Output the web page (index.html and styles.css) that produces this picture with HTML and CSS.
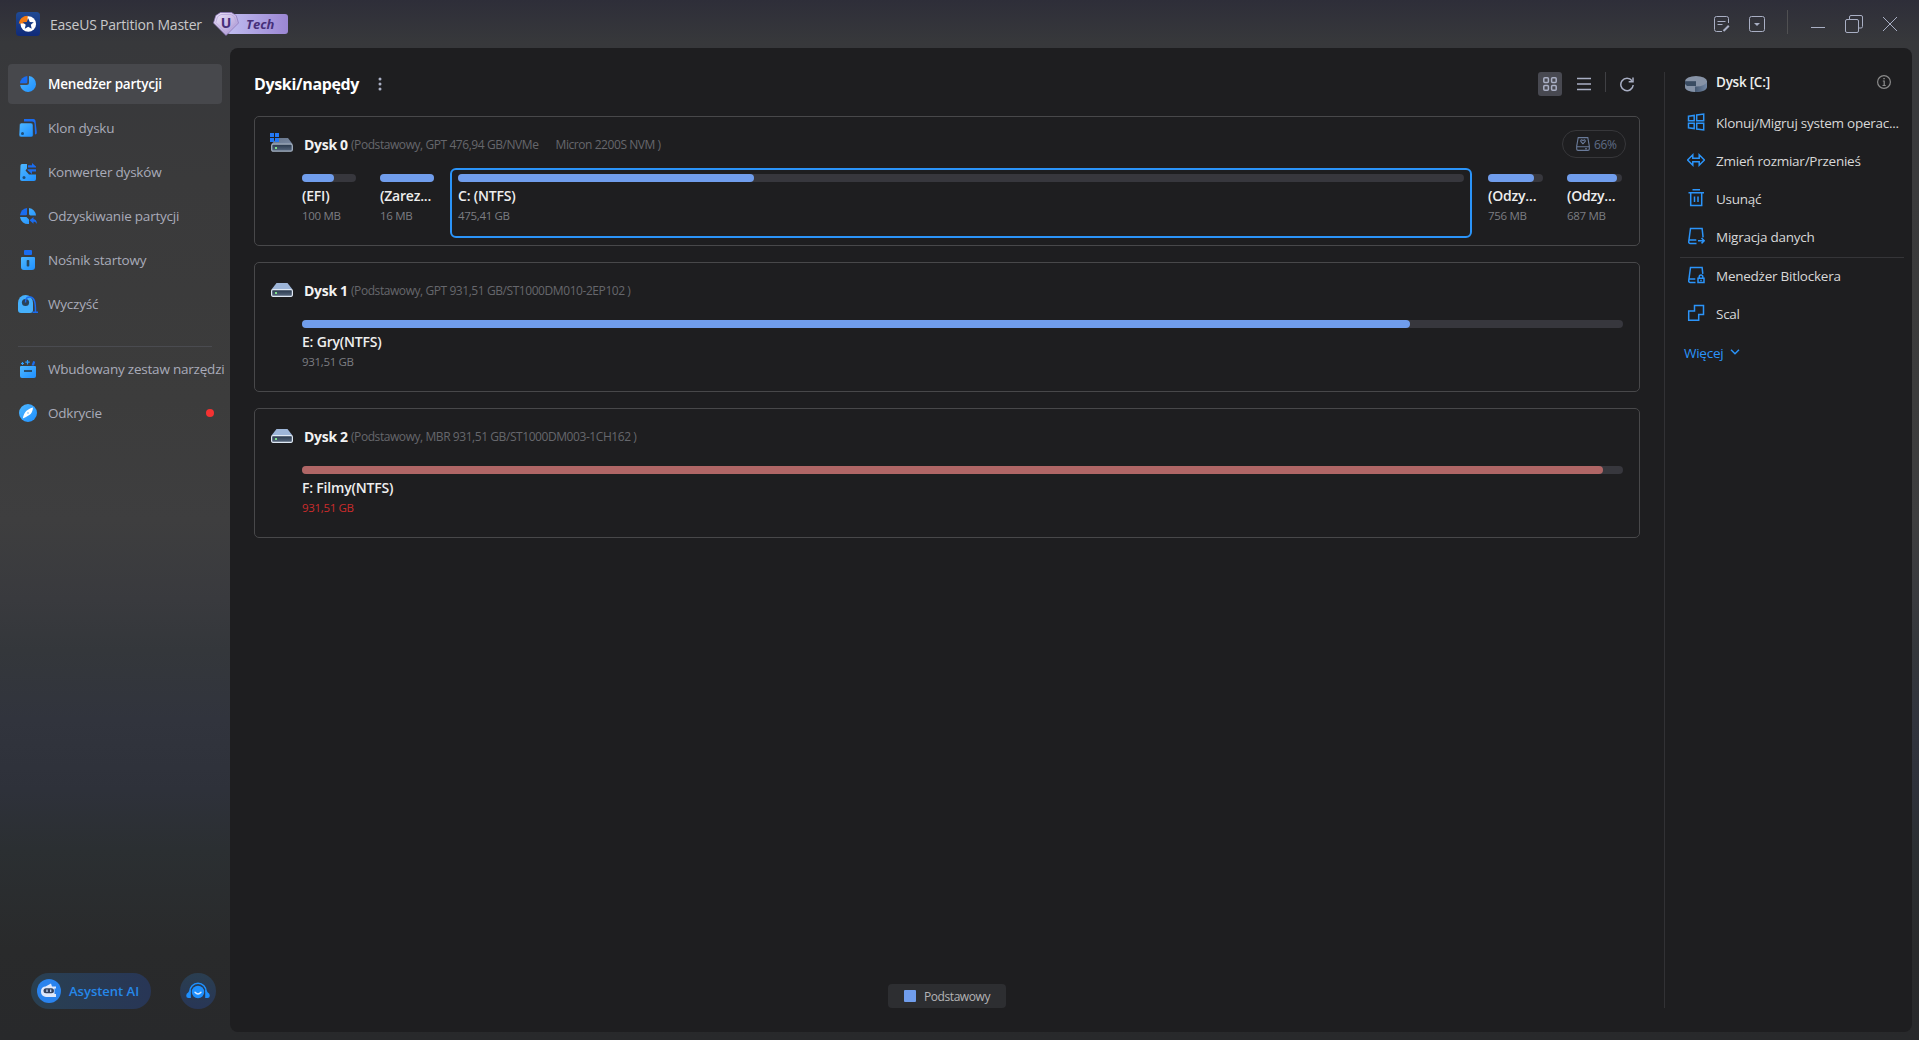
FILE: index.html
```
<!DOCTYPE html>
<html lang="pl">
<head>
    <meta charset="UTF-8">
    <title>EaseUS Partition Master</title>
    <link rel="stylesheet" href="styles.css">
</head>
<body>
<svg class="defs" width="0" height="0">
    <defs>
        <linearGradient id="blue" x1="0" y1="0" x2="1" y2="1">
            <stop offset="0" stop-color="#4fb8ff"/>
            <stop offset="1" stop-color="#1e8fff"/>
        </linearGradient>
        <linearGradient id="logo-bg" x1="0" y1="0" x2="0" y2="1">
            <stop offset="0" stop-color="#1f4a94"/>
            <stop offset="1" stop-color="#102a78"/>
        </linearGradient>
        <linearGradient id="gem" x1="0" y1="0" x2="1" y2="1">
            <stop offset="0" stop-color="#f0e8fb"/>
            <stop offset="1" stop-color="#a48fd0"/>
        </linearGradient>
        <linearGradient id="front" x1="0" y1="0" x2="0" y2="1">
            <stop offset="0" stop-color="#26364a"/>
            <stop offset="1" stop-color="#5a6a80"/>
        </linearGradient>
        <linearGradient id="steel" x1="0" y1="0" x2="1" y2="1">
            <stop offset="0" stop-color="#66748a"/>
            <stop offset="1" stop-color="#7888a0"/>
        </linearGradient>
        <linearGradient id="steel-side" x1="0" y1="0" x2="1" y2="0">
            <stop offset="0.4" stop-color="#40536c"/>
            <stop offset="1" stop-color="#7488a4"/>
        </linearGradient>
    </defs>
</svg>

<header class="titlebar">
    <svg class="logo" width="24" height="24" viewBox="0 0 24 24">
        <rect width="24" height="24" rx="3.5" fill="url(#logo-bg)"/>
        <circle cx="12.3" cy="12" r="7.8" fill="#fff"/>
        <path d="M11.6 11.4H2.8a8.8 8 0 0 1 8.8-7.6z" fill="#f47b12"/>
        <path d="M12.2 6.2l1.6 3.7 4 .3-3 2.6.9 3.9-3.5-2-3.4 2 .9-3.9-3-2.6 4-.3z" fill="#163a86"/>
    </svg>
    <span class="app-name">EaseUS Partition Master</span>
    <div class="badge">
        <svg class="gem" width="26" height="24" viewBox="0 0 26 24">
            <path d="M7.500.5h11l4.700 3 2.300 7.500L13 23.500.5 11l2.300-7.500z" fill="url(#gem)" stroke="#8a74b8" stroke-width=".7" stroke-linejoin="round"/>
            <path d="M8 2.500h10l3.500 2.300 1.700 5.700L13 20.800 2.800 10.500l1.700-5.700z" fill="none" stroke="#b6a5da" stroke-width=".8"/>
            <text x="13" y="16" text-anchor="middle" class="gem-letter">U</text>
        </svg>
        <span class="badge-text">Tech</span>
    </div>
    <div class="window-tools">
        <svg width="16" height="16" viewBox="0 0 16 16" class="line">
            <path d="M14.500 7V2.500a2 2 0 0 0-2-2h-10a2 2 0 0 0-2 2v11a2 2 0 0 0 2 2H8"/>
            <path d="M3.500 5.500h8M3.500 8.500h5"/>
            <path d="M9.500 15l5.300-5.300" class="pencil"/>
        </svg>
        <svg width="16" height="16" viewBox="0 0 16 16" class="line">
            <rect x=".5" y=".5" width="15" height="15" rx="2"/>
            <path d="M5 7h6l-3 3z" class="solid"/>
        </svg>
        <i class="tool-sep"></i>
        <svg width="16" height="16" viewBox="0 0 16 16" class="line"><path d="M1 11.500h14"/></svg>
        <svg width="18" height="18" viewBox="0 0 18 18" class="line">
            <rect x=".5" y="4.500" width="13" height="13" rx="1.500"/>
            <path d="M4.500 4.500v-2.500a1.500 1.500 0 0 1 1.500-1.500h10a1.500 1.500 0 0 1 1.500 1.500v9.500a1.500 1.500 0 0 1-1.500 1.500h-2"/>
        </svg>
        <svg width="16" height="16" viewBox="0 0 16 16" class="line"><path d="M1 1l14 14M15 1L1 15"/></svg>
    </div>
</header>

<div class="content">
    <aside class="sidebar">
        <nav class="menu">
            <a class="menu-item active">
                <svg width="20" height="20" viewBox="0 0 20 20">
                    <path d="M11 2a8 8 0 1 1-8.900 9H8.500a2.500 2.500 0 0 0 2.500-2.500z" fill="url(#blue)"/>
                    <path d="M9.300 2v6a1.300 1.300 0 0 1-1.300 1.300H2A8 8 0 0 1 9.300 2z" fill="#1a6cf0"/>
                </svg>
                <span>Menedżer partycji</span>
            </a>
            <a class="menu-item">
                <svg width="20" height="20" viewBox="0 0 20 20">
                    <path d="M6 1h9.500a2 2 0 0 1 2 1.700l1.300 11.500a2 2 0 0 1-1.800 2.300L16.500 6a2.500 2.500 0 0 0-2.500-2.500H6z" fill="#1a6cf0"/>
                    <path d="M3.500 5H13a2 2 0 0 1 2 2l.2 10a2 2 0 0 1-2 2H3a2 2 0 0 1-2-2L1.500 7a2 2 0 0 1 2-2z" fill="url(#blue)" stroke="#39393a" stroke-width=".5"/>
                    <circle cx="4.500" cy="15.500" r="1.500" fill="#1f4f7a"/>
                </svg>
                <span>Klon dysku</span>
            </a>
            <a class="menu-item">
                <svg width="20" height="20" viewBox="0 0 20 20">
                    <path d="M4 2h5v4.500l-1.500 2L11 12.500h7V17a2 2 0 0 1-2 2H4a2 2 0 0 1-2-2L2.500 3.500A1.500 1.500 0 0 1 4 2z" fill="url(#blue)"/>
                    <path d="M10 3.200h4V1l4 3.500v1h-8zM18 9.500h-4V12l-4.500-3.700v-1H18z" fill="#1a6cf0"/>
                    <circle cx="6" cy="15.500" r="1.500" fill="#1f4f7a"/>
                </svg>
                <span>Konwerter dysków</span>
            </a>
            <a class="menu-item">
                <svg width="20" height="20" viewBox="0 0 20 20">
                    <path d="M11 2a8 8 0 0 1 7 7.500h-5.500A2 2 0 0 1 11 8zM2 11h6.500l2.500 2.500V18A8 8 0 0 1 2 11z" fill="url(#blue)"/>
                    <path d="M9 2v6a1.200 1.200 0 0 1-1.200 1.200H2A8 8 0 0 1 9 2z" fill="#1a6cf0"/>
                    <path d="M11.500 14.300l4-3.300v2c2 .2 3.300 1.700 3.500 5-1-1.700-2-2.200-3.500-2.200v2z" fill="#1a6cf0"/>
                </svg>
                <span>Odzyskiwanie partycji</span>
            </a>
            <a class="menu-item">
                <svg width="20" height="22" viewBox="0 0 20 22">
                    <rect x="6" y="1" width="8" height="5" rx="1" fill="#1a6cf0"/>
                    <path d="M3 9q0-1 1-1h12q1 0 1 1v9q0 3-3 3H6q-3 0-3-3z" fill="url(#blue)"/>
                    <rect x="8.700" y="11" width="2.600" height="6.500" rx=".8" fill="#26465f"/>
                </svg>
                <span>Nośnik startowy</span>
            </a>
            <a class="menu-item">
                <svg width="20" height="20" viewBox="0 0 20 20">
                    <path d="M0 9a7.500 8 0 0 1 15 0v7a3 3 0 0 1-3 3H3a3 3 0 0 1-3-3z" fill="#46b0fb"/>
                    <circle cx="7.500" cy="8.500" r="3.600" fill="#2a4257"/>
                    <path d="M7.500 8.500C7 4 10 2.500 12.500 3c4 .8 5 5 5 14.500M14.500 18.300h5.500" fill="none" stroke="#1a6cf0" stroke-width="1.500"/>
                </svg>
                <span>Wyczyść</span>
            </a>
        </nav>
        <hr class="menu-sep">
        <nav class="menu">
            <a class="menu-item">
                <svg width="20" height="20" viewBox="0 0 20 20">
                    <path d="M2 8q0-1 1-1h14q1 0 1 1v9q0 2-2 2H4q-2 0-2-2z" fill="url(#blue)"/>
                    <path d="M6 12h8" stroke="#24394c" stroke-width="1.600"/>
                    <path d="M9.500 1v4.500M7.300 3.200h4.400M4.500 3v3M3 4.500h3" stroke="#2b9dff" stroke-width="1.200"/>
                    <path d="M13.500 6.500l1.700-4.500 2 .7-1.200 3.800z" fill="#1a6cf0"/>
                </svg>
                <span>Wbudowany zestaw narzędzi</span>
            </a>
            <a class="menu-item">
                <svg width="20" height="20" viewBox="0 0 20 20">
                    <circle cx="10" cy="10" r="9" fill="url(#blue)"/>
                    <path d="M15 4.500c-.2 3.500-1.700 6.500-3.700 7.500C9 13.500 7 14.500 4.800 15.500 5.500 12 6.500 9.500 8.500 7.800 10.500 6.200 12.500 5.200 15 4.500z" fill="#fff"/>
                    <circle cx="10" cy="10" r="1" fill="#a7d5ff"/>
                </svg>
                <span>Odkrycie</span>
                <i class="dot"></i>
            </a>
        </nav>
        <div class="assist">
            <a class="assist-ai">
                <svg width="24" height="24" viewBox="0 0 24 24">
                    <circle cx="12" cy="12" r="12" fill="#2a83ee"/>
                    <path d="M8.500 7.500L14 4.500l1 3h4v2h-1.500v5.500H19v3H9a5 5 0 0 1-5-5V12a4.500 4.500 0 0 1 4.500-4.500z" fill="#dfe8fb"/>
                    <rect x="6.500" y="9.300" width="10.500" height="5" rx="2.500" fill="#34415c"/>
                    <path d="M10 10.500v2.600M13.700 10.500v2.600" stroke="#cfe0ff" stroke-width="1.200"/>
                </svg>
                <span>Asystent AI</span>
            </a>
            <a class="assist-help">
                <svg width="24" height="20" viewBox="0 0 24 20">
                    <circle cx="12" cy="11" r="6.200" fill="#1e90ff"/>
                    <path d="M3.700 11a8.300 8.800 0 0 1 16.600 0" fill="none" stroke="#1e90ff" stroke-width="1.500"/>
                    <path d="M4.800 9v8H2.500A2.300 2.300 0 0 1 .2 14.700q0-2.400 2-3.200Q3 9 4.800 9zM19.200 9v8h2.300a2.300 2.300 0 0 0 2.300-2.300q0-2.400-2-3.200Q21 9 19.200 9z" fill="#1e90ff"/>
                    <path d="M9 11.300q3 3.400 6 0" fill="none" stroke="#dbe9ff" stroke-width="1.400" stroke-linecap="round"/>
                </svg>
            </a>
        </div>
    </aside>

    <div class="panel">
        <main class="disks">
            <div class="disks-head">
                <h1>Dyski/napędy</h1>
                <svg class="more" width="4" height="14" viewBox="0 0 4 14">
                    <circle cx="2" cy="2" r="1.500"/><circle cx="2" cy="7" r="1.500"/><circle cx="2" cy="12" r="1.500"/>
                </svg>
                <div class="view-tools">
                    <a class="view-grid">
                        <svg width="14" height="14" viewBox="0 0 14 14" class="line thick">
                            <rect x=".8" y=".8" width="4.600" height="4.600" rx="1"/>
                            <rect x="8.600" y=".8" width="4.600" height="4.600" rx="1"/>
                            <rect x=".8" y="8.600" width="4.600" height="4.600" rx="1"/>
                            <rect x="8.600" y="8.600" width="4.600" height="4.600" rx="1"/>
                        </svg>
                    </a>
                    <svg width="14" height="14" viewBox="0 0 14 14" class="line thick"><path d="M0 1.500h14M0 7h14M0 12.500h14"/></svg>
                    <i class="view-sep"></i>
                    <svg width="16" height="16" viewBox="0 0 16 16" class="line thick">
                        <path d="M13 4.800A6.200 6.200 0 1 0 14.200 9"/>
                        <path d="M14 1.500v4.300h-4.300"/>
                    </svg>
                </div>
            </div>

            <section class="disk">
                <div class="disk-head">
                    <svg class="disk-icon system" width="24" height="20" viewBox="0 0 24 20">
                        <path d="M7 5h11l4.500 6h-21z" fill="url(#steel)"/>
                        <rect x="1.700" y="11.200" width="20.600" height="7" rx="1.500" fill="url(#front)" stroke="#a3b0c0" stroke-width="1.300"/>
                        <rect x="5" y="14" width="2" height="2" fill="#7fe08a"/>
                        <path d="M0 0h4v4H0zM5 0h4v4H5zM0 5h4v4H0zM5 5h4v4H5z" fill="#2378f5"/>
                    </svg>
                    <span class="disk-name">Dysk 0</span>
                    <span class="disk-info">(Podstawowy, GPT 476,94 GB/NVMe<span class="gap"></span>Micron 2200S NVM )</span>
                    <div class="health">
                        <svg width="14" height="14" viewBox="0 0 14 14">
                            <path d="M2.200.6h9.600l1.500 8.500v3a1.300 1.300 0 0 1-1.300 1.300H2A1.300 1.300 0 0 1 .7 12.100v-3zM.7 9.800h12.600M9 11.800h2"/>
                            <path d="M7 6.800L4.800 4.500q-.3-1.700 1-1.700L7 3.600l1.200-.8q1.300 0 1 1.700z"/>
                        </svg>
                        <span>66%</span>
                    </div>
                </div>
                <div class="parts">
                    <div class="part small">
                        <div class="bar"><i style="width: 60%"></i></div>
                        <b>(EFI)</b><small>100 MB</small>
                    </div>
                    <div class="part small">
                        <div class="bar"><i style="width: 100%"></i></div>
                        <b>(Zarez...</b><small>16 MB</small>
                    </div>
                    <div class="part selected">
                        <div class="bar"><i style="width: 29.400%"></i></div>
                        <b>C: (NTFS)</b><small>475,41 GB</small>
                    </div>
                    <div class="part small">
                        <div class="bar"><i style="width: 84%"></i></div>
                        <b>(Odzy...</b><small>756 MB</small>
                    </div>
                    <div class="part small">
                        <div class="bar"><i style="width: 91%"></i></div>
                        <b>(Odzy...</b><small>687 MB</small>
                    </div>
                </div>
            </section>

            <section class="disk">
                <div class="disk-head">
                    <svg class="disk-icon" width="24" height="20" viewBox="0 0 24 20">
                        <path d="M6.500 3h11l5 6.500h-21z" fill="#9db5d8"/>
                        <rect x="1.600" y="9.700" width="20.800" height="6.600" rx="1.200" fill="url(#front)" stroke="#dfe8f4" stroke-width="1.200"/>
                        <rect x="5" y="12" width="2" height="2" fill="#7fe08a"/>
                    </svg>
                    <span class="disk-name">Dysk 1</span>
                    <span class="disk-info">(Podstawowy, GPT 931,51 GB/ST1000DM010-2EP102 )</span>
                </div>
                <div class="parts">
                    <div class="part">
                        <div class="bar"><i style="width: 83.900%"></i></div>
                        <b>E: Gry(NTFS)</b><small>931,51 GB</small>
                    </div>
                </div>
            </section>

            <section class="disk">
                <div class="disk-head">
                    <svg class="disk-icon" width="24" height="20" viewBox="0 0 24 20">
                        <path d="M6.500 3h11l5 6.500h-21z" fill="#9db5d8"/>
                        <rect x="1.600" y="9.700" width="20.800" height="6.600" rx="1.200" fill="url(#front)" stroke="#dfe8f4" stroke-width="1.200"/>
                        <rect x="5" y="12" width="2" height="2" fill="#7fe08a"/>
                    </svg>
                    <span class="disk-name">Dysk 2</span>
                    <span class="disk-info">(Podstawowy, MBR 931,51 GB/ST1000DM003-1CH162 )</span>
                </div>
                <div class="parts">
                    <div class="part full">
                        <div class="bar"><i style="width: 98.500%"></i></div>
                        <b>F: Filmy(NTFS)</b><small>931,51 GB</small>
                    </div>
                </div>
            </section>

            <div class="legend"><i></i><span>Podstawowy</span></div>
        </main>

        <aside class="actions">
            <div class="actions-head">
                <svg width="22" height="16" viewBox="0 0 22 16">
                    <path d="M0 5v6c0 3 5 5 11 5s11-2 11-5V5z" fill="url(#steel-side)"/>
                    <ellipse cx="11" cy="5.200" rx="11" ry="5.200" fill="#8793a6"/>
                    <path d="M0 5.200h11V10H0z" fill="#3a4c62"/>
                    <path d="M0 8l2 2h8v6C4.500 15.800 0 14 0 11z" fill="#8592a6"/>
                </svg>
                <span>Dysk [C:]</span>
                <svg class="info" width="14" height="14" viewBox="0 0 14 14">
                    <circle cx="7" cy="7" r="6.400"/>
                    <path d="M5.800 6h1.400v4.500M5.500 10.500h3.200M6.300 3.700h1.500"/>
                </svg>
            </div>
            <a class="action">
                <svg width="18" height="18" viewBox="0 0 18 18">
                    <path d="M1.500 3.200l5.700-.8v5.400H1.500zM9.700 2l7-1v6.800h-7zM1.500 10.200h5.700v5.400l-5.700-.8zM9.700 10.200h7V17l-7-1z"/>
                </svg>
                <span>Klonuj/Migruj system operac...</span>
            </a>
            <a class="action">
                <svg width="18" height="18" viewBox="0 0 18 18">
                    <path d="M.6 9l5.200-5.200v3.400h6.400V3.800L17.400 9l-5.200 5.200v-3.400H5.800v3.400z"/>
                </svg>
                <span>Zmień rozmiar/Przenieś</span>
            </a>
            <a class="action">
                <svg width="18" height="18" viewBox="0 0 18 18">
                    <path d="M5.500.8h7.500M1.500 3.800h15.500M3.700 3.800v12.800h11V3.800M7.500 7.500V13M11 7.500V13"/>
                </svg>
                <span>Usunąć</span>
            </a>
            <a class="action">
                <svg width="18" height="18" viewBox="0 0 18 18">
                    <path d="M9.500 16.400H3.200a1.500 1.500 0 0 1-1.500-1.600L3.500 1.400h11.600l1 9M1.800 13h7.500M11 13.700h6M14.500 11l2.700 2.700-2.700 2.700"/>
                </svg>
                <span>Migracja danych</span>
            </a>
            <hr>
            <a class="action">
                <svg width="18" height="18" viewBox="0 0 18 18">
                    <path d="M8.500 16.400H3.200a1.500 1.500 0 0 1-1.500-1.600L3.500 1.400h11.600l.7 6.500M1.800 13h6.500"/>
                    <path d="M11 12.300h6v4.200h-6zM12.200 12.300v-1.500a1.800 1.800 0 0 1 3.600 0v1.500M14 13.800v1.400"/>
                </svg>
                <span>Menedżer Bitlockera</span>
            </a>
            <a class="action">
                <svg width="18" height="18" viewBox="0 0 18 18">
                    <path d="M7.500 1.500h9v9h-4.800v5.800H1.700V7h5.800z"/>
                </svg>
                <span>Scal</span>
            </a>
            <a class="expand">
                <span>Więcej</span>
                <svg width="10" height="8" viewBox="0 0 10 8"><path d="M1 1.800l4 4 4-4"/></svg>
            </a>
        </aside>
    </div>
</div>
</body>
</html>
```
FILE: styles.css
```
* {
    box-sizing: border-box;
}

body {
    margin: 0;
    width: 1919px;
    height: 1040px;
    overflow: hidden;
    display: flex;
    flex-direction: column;
    font-family: "Open Sans", "Noto Sans", sans-serif;
    font-size: 13px;
    color: #d6d6d6;
    background: linear-gradient(180deg, #2e2e39 0, #37383b 42px, #3a3a3b 180px, #3c3c3c 400px, #3e3e3f 520px, #393a3e 600px, #34373b 650px, #31343d 720px, #2e313a 790px, #2b2f32 850px, #292a2b 950px, #28292b 1040px);
}

svg {
    flex: none;
}

.defs {
    position: absolute;
}

.titlebar {
    height: 48px;
    display: flex;
    align-items: center;
    padding: 0 21px 0 16px;
}

.app-name {
    margin-left: 10px;
    width: 163px;
    font-size: 14px;
    letter-spacing: -0.220px;
    white-space: nowrap;
    color: #c8c8ca;
}

.badge {
    display: flex;
    align-items: center;
    width: 75px;
    height: 24px;
}

.gem {
    position: relative;
    z-index: 1;
}

.gem-letter {
    font-size: 14px;
    font-weight: 700;
    fill: #47307a;
}

.badge-text {
    width: 61px;
    height: 20px;
    margin-left: -12px;
    padding-left: 19px;
    border-radius: 3px;
    background: linear-gradient(90deg, #c0bdf0, #9b86d3);
    font-size: 13px;
    line-height: 20px;
    font-weight: 700;
    font-style: italic;
    color: #47307a;
}

.window-tools {
    margin-left: auto;
    display: flex;
    align-items: center;
}

.window-tools svg {
    margin-left: 19px;
}

.tool-sep {
    width: 1px;
    height: 24px;
    margin: -4px 3px 0 22px;
    background: #505052;
}

.line {
    fill: none;
    stroke: #a9afc4;
    stroke-width: 1;
}

.line .solid {
    fill: #a9afc4;
    stroke: none;
}

.line .pencil {
    stroke-width: 2;
}

.thick {
    stroke-width: 1.500;
}

.content {
    display: flex;
    height: 984px;
}

.sidebar {
    width: 230px;
    padding-top: 16px;
    display: flex;
    flex-direction: column;
}

.menu {
    display: flex;
    flex-direction: column;
    gap: 4px;
    padding: 0 8px;
}

.menu-item {
    display: flex;
    align-items: center;
    gap: 10px;
    height: 40px;
    padding-left: 10px;
    border-radius: 4px;
    font-size: 13.500px;
    letter-spacing: -0.210px;
    white-space: nowrap;
    color: #a9abb9;
}

.menu-item.active {
    background: #47484c;
    font-weight: 600;
    color: #fff;
}

.menu-sep {
    width: 194px;
    height: 1px;
    margin: 22px 0 2px 18px;
    border: none;
    background: #4a4b50;
}

.dot {
    width: 8px;
    height: 8px;
    margin-left: auto;
    margin-right: 8px;
    border-radius: 50%;
    background: #f53232;
}

.assist {
    display: flex;
    align-items: center;
    gap: 29px;
    margin: auto 0 23px 31px;
}

.assist-ai {
    display: flex;
    align-items: center;
    gap: 8px;
    width: 120px;
    height: 36px;
    padding-left: 6px;
    border-radius: 18px;
    background: linear-gradient(90deg, #294052, #283656);
    font-weight: 600;
    color: #2688ea;
    white-space: nowrap;
}

.assist-help {
    display: flex;
    align-items: center;
    justify-content: center;
    width: 36px;
    height: 36px;
    border-radius: 50%;
    background: linear-gradient(180deg, #2a3e50, #283656);
}

.panel {
    display: flex;
    width: 1682px;
    padding: 24px 8px 24px 24px;
    border-radius: 8px;
    background: #1e1e20;
}

.disks {
    display: flex;
    flex-direction: column;
    width: 1386px;
}

.disks-head {
    display: flex;
    align-items: center;
    height: 24px;
    margin-bottom: 20px;
}

h1 {
    width: 124px;
    margin: 0;
    font-size: 16px;
    font-weight: 700;
    letter-spacing: -0.350px;
    color: #fff;
    white-space: nowrap;
}

.more {
    fill: #a9afc4;
}

.view-tools {
    display: flex;
    align-items: center;
    margin-left: auto;
    margin-right: 5px;
}

.view-grid {
    display: flex;
    align-items: center;
    justify-content: center;
    width: 24px;
    height: 24px;
    margin-right: 15px;
    border-radius: 3px;
    background: #484951;
}

.view-sep {
    width: 1px;
    height: 20px;
    margin: -4px 13px 0 14px;
    background: #404044;
}

.disk {
    height: 130px;
    margin-bottom: 16px;
    padding: 13px 9px 0 15px;
    border: 1px solid #48484a;
    border-radius: 5px;
}

.disk-head {
    display: flex;
    align-items: center;
    height: 28px;
    margin-right: 4px;
}

.disk-icon.system {
    margin-top: -2px;
}

.disk-name {
    width: 47px;
    margin-left: 10px;
    font-size: 14px;
    font-weight: 700;
    letter-spacing: -0.300px;
    color: #f2f2f2;
    white-space: nowrap;
}

.disk-info {
    font-size: 12px;
    letter-spacing: -0.430px;
    color: #66676c;
    white-space: nowrap;
}

.gap {
    display: inline-block;
    width: 17px;
}

.health {
    display: flex;
    align-items: center;
    gap: 4px;
    width: 64px;
    height: 28px;
    margin-left: auto;
    padding-left: 13px;
    border: 1px solid #37373a;
    border-radius: 14px;
    font-size: 12px;
    letter-spacing: -0.400px;
    color: #5f6c86;
}

.health svg {
    fill: none;
    stroke: #6a7b9a;
    stroke-width: 1.100;
}

.parts {
    display: flex;
    gap: 8px;
    margin: 10px 0 0 24px;
}

.part {
    display: flex;
    flex-direction: column;
    flex: 1;
    height: 70px;
    padding: 6px 7px 0 8px;
}

.part.small {
    flex: none;
    width: 70px;
    padding-right: 8px;
}

.part.selected {
    padding: 4px 6px 0;
    border: 2px solid #2b94f9;
    border-radius: 6px;
}

.part.selected ~ .small {
    width: 71px;
}

.bar {
    height: 8px;
    border-radius: 4px;
    background: #37373d;
}

.bar i {
    display: block;
    height: 8px;
    border-radius: 4px;
    background: #709dec;
}

.part b {
    margin-top: 4px;
    font-size: 14px;
    line-height: 20px;
    font-weight: 600;
    letter-spacing: -0.200px;
    color: #eee;
    white-space: nowrap;
}

.part small {
    margin-top: 1px;
    font-size: 11.500px;
    line-height: 18px;
    letter-spacing: -0.330px;
    color: #7c7d82;
    white-space: nowrap;
}

.part.full .bar i {
    background: #b06666;
}

.part.full small {
    color: #cc2c2c;
}

.legend {
    display: flex;
    align-items: center;
    gap: 8px;
    width: 118px;
    height: 24px;
    margin: auto auto 0 634px;
    padding-left: 16px;
    border-radius: 4px;
    background: #2d2e31;
    font-size: 12px;
    letter-spacing: -0.430px;
    color: #b4b4b6;
}

.legend i {
    width: 12px;
    height: 12px;
    border-radius: 1px;
    background: #709dec;
}

.actions {
    width: 240px;
    margin-left: 24px;
    padding-left: 15px;
    border-left: 1px solid #323235;
}

.actions-head {
    display: flex;
    align-items: center;
    height: 20px;
    margin-bottom: 12px;
    padding: 0 13px 0 5px;
    font-size: 13.500px;
    font-weight: 600;
    letter-spacing: -0.250px;
    color: #eee;
}

.actions-head span {
    margin-left: 9px;
}

.actions-head svg:first-child {
    margin-top: 3px;
}

.info {
    margin-left: auto;
    fill: none;
    stroke: #8b8b8b;
    stroke-width: 1.200;
}

.action {
    display: flex;
    align-items: center;
    gap: 11px;
    height: 38px;
    padding-left: 7px;
    font-size: 13.500px;
    letter-spacing: -0.250px;
    color: #d8d8d8;
    white-space: nowrap;
}

.action svg,
.expand svg {
    margin-top: -2px;
    fill: none;
    stroke: #2b94f9;
    stroke-width: 1.500;
}

.actions hr {
    height: 1px;
    margin: 1px 0 -1px;
    border: none;
    background: #353538;
}

.expand {
    display: flex;
    align-items: center;
    gap: 7px;
    height: 40px;
    padding-left: 4px;
    font-size: 13.500px;
    letter-spacing: -0.250px;
    color: #2b94f9;
}
```
